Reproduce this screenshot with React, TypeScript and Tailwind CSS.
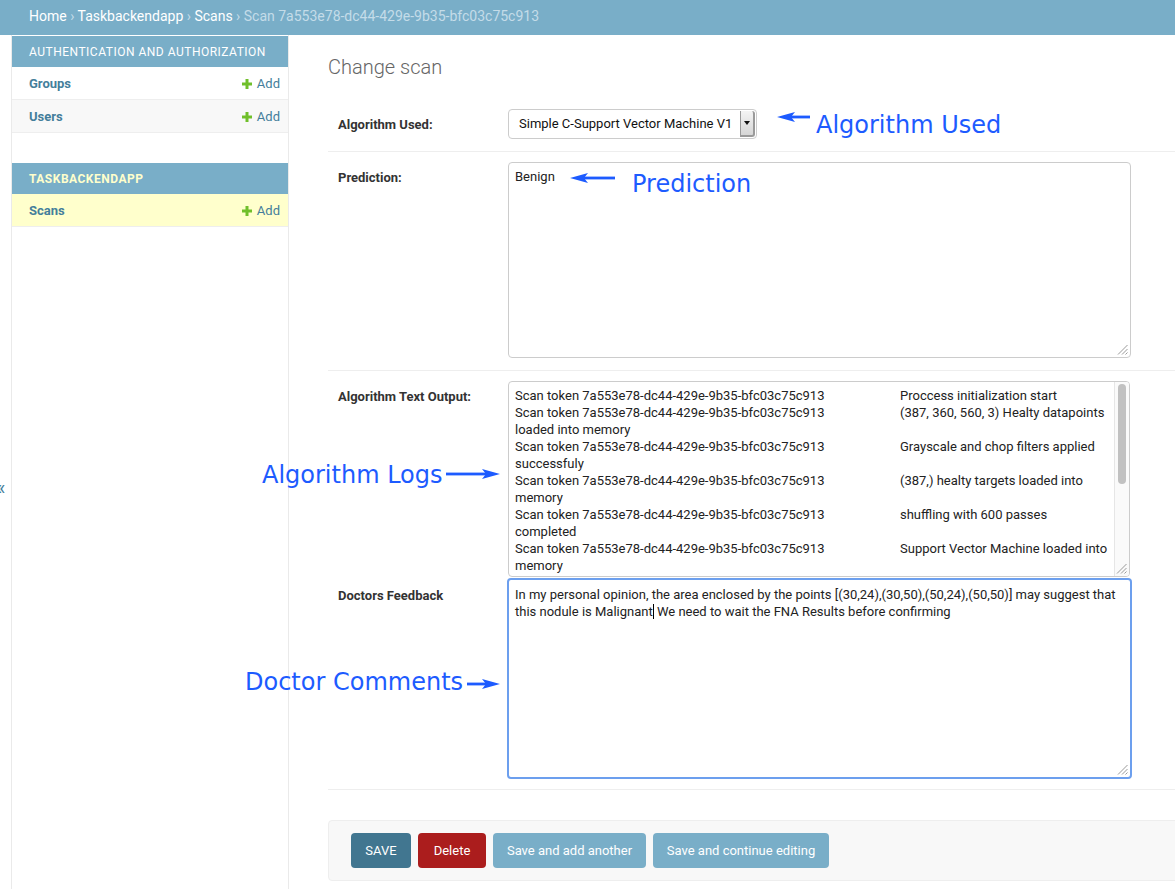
import React from "react";

const TOKEN = "Scan token 7a553e78-dc44-429e-9b35-bfc03c75c913";

// log lines: [message, continuation]
const logs: [string, string | null][] = [
  ["Proccess initialization start", null],
  ["(387, 360, 560, 3) Healty datapoints", "loaded into memory"],
  ["Grayscale and chop filters applied", "successfuly"],
  ["(387,) healty targets loaded into", "memory"],
  ["shuffling with 600 passes", "completed"],
  ["Support Vector Machine loaded into", "memory"],
];

function PlusIcon() {
  return (
    <svg width="10" height="10" viewBox="0 0 10 10">
      <rect x="3.5" y="0" width="3" height="10" fill="#70bf2b" />
      <rect x="0" y="3.5" width="10" height="3" fill="#70bf2b" />
    </svg>
  );
}

function ResizeGrip() {
  return (
    <svg className="absolute right-[2px] bottom-[2px]" width="11" height="11" viewBox="0 0 11 11">
      <line x1="10.5" y1="1" x2="1" y2="10.5" stroke="#999" strokeWidth="1" />
      <line x1="10.5" y1="5" x2="5" y2="10.5" stroke="#999" strokeWidth="1" />
      <line x1="10.5" y1="8.5" x2="8.5" y2="10.5" stroke="#999" strokeWidth="1" />
    </svg>
  );
}

function Arrow({ left, top, width, dir }: { left: number; top: number; width: number; dir: "left" | "right" }) {
  const w = width;
  const head =
    dir === "left"
      ? `0,6 18,1 14,6 18,11`
      : `${w},6 ${w - 18},1 ${w - 14},6 ${w - 18},11`;
  const shaft = dir === "left" ? { x: 13, w: w - 13 } : { x: 0, w: w - 13 };
  return (
    <svg className="absolute" style={{ left, top }} width={w} height="12" viewBox={`0 0 ${w} 12`}>
      <polygon points={head} fill="#1d5bff" />
      <rect x={shaft.x} y="4.6" width={shaft.w} height="2.8" fill="#1d5bff" />
    </svg>
  );
}

function SidebarRow({ name, shaded, current }: { name: string; shaded?: boolean; current?: boolean }) {
  return (
    <div
      className={
        "flex h-[33px] items-center justify-between border-b border-[#eeeeee] pl-[17px] pr-[8px] pt-[2px] " +
        (current ? "bg-[#ffffcc]" : shaded ? "bg-[#f8f8f8]" : "bg-white")
      }
    >
      <span className="text-[13px] font-bold text-[#447e9b]">{name}</span>
      <span className="flex items-center gap-[5px] text-[13px] text-[#447e9b]">
        <PlusIcon />
        Add
      </span>
    </div>
  );
}

export default function App() {
  return (
    <div className="relative h-[889px] w-[1175px] overflow-hidden bg-white font-['Roboto',sans-serif] text-[#333]">
      {/* Breadcrumbs */}
      <div className="h-[35px] bg-[#79aec8] pl-[29px] pt-[7px] text-[14px] leading-[18px] text-[#c4dce8]">
        <span className="text-white">Home</span> ›{" "}
        <span className="text-white">Taskbackendapp</span> ›{" "}
        <span className="text-white">Scans</span> › Scan 7a553e78-dc44-429e-9b35-bfc03c75c913
      </div>

      <div className="flex h-[854px]">
        {/* collapsed toggle strip */}
        <div className="w-[12px] shrink-0 overflow-hidden border-r border-[#eaeaea] pt-[441px]">
          <span className="-ml-[4px] block text-[20px] leading-[24px] text-[#447e9b]">«</span>
        </div>

        {/* Sidebar */}
        <nav className="w-[277px] shrink-0 border-r border-[#eaeaea] pt-[1px]">
          <div className="mb-[30px]">
            <div className="flex h-[31px] items-center bg-[#79aec8] pl-[17px] text-[12px] tracking-[0.5px] text-white">
              AUTHENTICATION AND AUTHORIZATION
            </div>
            <SidebarRow name="Groups" />
            <SidebarRow name="Users" shaded />
          </div>
          <div>
            <div className="flex h-[31px] items-center bg-[#79aec8] pl-[17px] text-[12px] font-bold tracking-[0.5px] text-[#ffffcc]">
              TASKBACKENDAPP
            </div>
            <SidebarRow name="Scans" current />
          </div>
        </nav>

        {/* Content */}
        <main className="min-w-0 flex-1 overflow-hidden pl-[39px] pt-[20px]">
          <h1 className="mb-[20px] text-[20px] font-light leading-[24px] text-[#666]">Change scan</h1>

          {/* Algorithm used */}
          <div className="flex border-b border-[#eeeeee] pb-[12px] pt-[10px]">
            <div className="w-[180px] shrink-0 pl-[10px] pt-[8px] text-[13px] font-bold leading-[16px]">Algorithm Used:</div>
            <div className="flex h-[30px] w-[249px] items-stretch overflow-hidden rounded-[4px] border border-[#cccccc] bg-white">
              <div className="flex flex-1 items-center pl-[10px] text-[13px] text-[#111]">Simple C-Support Vector Machine V1</div>
              <div className="my-[1px] mr-[1px] flex w-[15px] items-center justify-center rounded-r-[3px] border-b-2 border-l border-r-2 border-[#9a9a9a] bg-gradient-to-b from-[#f4f4f4] to-[#d6d6d6]">
                <svg width="6" height="4" viewBox="0 0 6 4">
                  <polygon points="0,0 6,0 3,4" fill="#111" />
                </svg>
              </div>
            </div>
          </div>

          {/* Prediction */}
          <div className="flex border-b border-[#eeeeee] pb-[12px] pt-[10px]">
            <div className="w-[180px] shrink-0 pl-[10px] pt-[8px] text-[13px] font-bold leading-[16px]">Prediction:</div>
            <div className="relative h-[196px] w-[623px] rounded-[4px] border border-[#cccccc] px-[6px] pt-[5px] text-[13px] leading-[17px] text-[#222]">
              Benign
              <ResizeGrip />
            </div>
          </div>

          {/* Algorithm text output */}
          <div className="flex pb-[1px] pt-[10px]">
            <div className="w-[180px] shrink-0 pl-[10px] pt-[8px] text-[13px] font-bold leading-[16px]">Algorithm Text Output:</div>
            <div className="relative h-[196px] w-[622px] overflow-hidden rounded-[4px] border border-[#cccccc] pl-[6px] pt-[5px] text-[13px] leading-[17px] text-[#222]">
              {logs.map(([msg, cont], i) => (
                <div key={i}>
                  <div className="whitespace-nowrap">
                    <span className="inline-block w-[385px]">{TOKEN}</span>
                    {msg}
                  </div>
                  {cont && <div className="whitespace-nowrap">{cont}</div>}
                </div>
              ))}
              <div className="absolute bottom-0 right-0 top-0 w-[15px] border-l border-[#e6e6e6] bg-[#fafafa]">
                <div className="ml-[3px] mt-[2px] h-[100px] w-[8px] rounded-full bg-[#c1c1c1]" />
              </div>
              <ResizeGrip />
            </div>
          </div>

          {/* Doctors feedback */}
          <div className="flex border-b border-[#eeeeee] pb-[10px]">
            <div className="w-[180px] shrink-0 pl-[10px] pt-[10px] text-[13px] font-bold leading-[16px]">Doctors Feedback</div>
            <div className="relative -ml-[1px] h-[201px] w-[625px] rounded-[4px] border-2 border-[#6c9fee] px-[6px] pt-[6px] text-[13px] leading-[17px] text-[#222]">
              <div className="whitespace-nowrap">
                In my personal opinion, the area enclosed by the points [(30,24),(30,50),(50,24),(50,50)] may suggest that
              </div>
              <div className="whitespace-nowrap">
                this nodule is Malignant
                <span className="inline-block h-[15px] w-px bg-black align-[-3px]" /> We need to wait the FNA Results before confirming
              </div>
              <ResizeGrip />
            </div>
          </div>

          {/* Submit row */}
          <div className="mt-[30px] flex w-[900px] gap-[7px] rounded-[4px] border border-[#eeeeee] bg-[#f8f8f8] py-[12px] pl-[22px]">
            <div className="flex h-[35px] w-[60px] items-center justify-center rounded-[4px] bg-[#417690] text-[13px] text-white">SAVE</div>
            <div className="flex h-[35px] w-[68px] items-center justify-center rounded-[4px] bg-[#ab1d1d] text-[13px] text-white">Delete</div>
            <div className="flex h-[35px] w-[153px] items-center justify-center rounded-[4px] bg-[#79aec8] text-[13px] text-white">Save and add another</div>
            <div className="flex h-[35px] w-[176px] items-center justify-center rounded-[4px] bg-[#79aec8] text-[13px] text-white">Save and continue editing</div>
          </div>
        </main>
      </div>

      {/* Annotations */}
      <div className="pointer-events-none font-['DejaVu_Sans',sans-serif] text-[24px] leading-[28px] text-[#1d5bff]">
        <Arrow left={777} top={111} width={33} dir="left" />
        <span className="absolute left-[816px] top-[111px]">Algorithm Used</span>
        <Arrow left={570} top={172} width={45} dir="left" />
        <span className="absolute left-[632px] top-[170px]">Prediction</span>
        <span className="absolute left-[262px] top-[461px]">Algorithm Logs</span>
        <Arrow left={446} top={468} width={54} dir="right" />
        <span className="absolute left-[245px] top-[668px]">Doctor Comments</span>
        <Arrow left={467} top={678} width={33} dir="right" />
      </div>
    </div>
  );
}
